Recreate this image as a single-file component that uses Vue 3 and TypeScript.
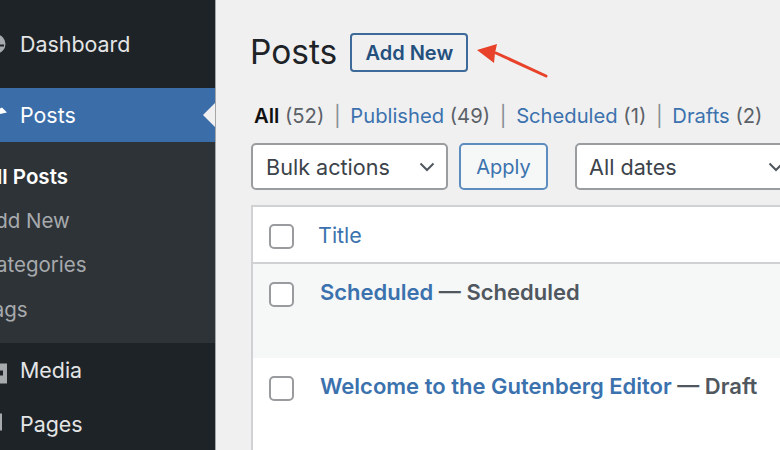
<script setup lang="ts">
const subItems = [
  { label: 'All Posts', current: true },
  { label: 'Add New', current: false },
  { label: 'Categories', current: false },
  { label: 'Tags', current: false },
]
const filters = [
  { label: 'All', count: 52, current: true },
  { label: 'Published', count: 49, current: false },
  { label: 'Scheduled', count: 1, current: false },
  { label: 'Drafts', count: 2, current: false },
]
</script>

<template>
  <div class="page">
    <aside class="sidebar">
      <div class="item dash">
        <svg class="icon" viewBox="0 0 29 29">
          <circle cx="5" cy="14" r="9.500" fill="#a7aaad" />
          <path d="M0 15.500h13" stroke="#1e2327" stroke-width="2" />
        </svg>
        <span>Dashboard</span>
      </div>
      <div class="item active">
        <svg class="icon" viewBox="0 0 29 29"><path d="M11 6.500 16 11.500 9 13 4 20 0 14 6 9z" fill="#fff" /></svg>
        <span>Posts</span>
        <i class="notch"></i>
      </div>
      <ul class="sub">
        <li v-for="s in subItems" :key="s.label" :class="{ current: s.current }">{{ s.label }}</li>
      </ul>
      <div class="item media">
        <svg class="icon" viewBox="0 0 29 29"><path fill-rule="evenodd" d="M0 7.500h16v20H0zM4 14.500v5h8v-5z" fill="#a7aaad" /></svg>
        <span>Media</span>
      </div>
      <div class="item pages">
        <svg class="icon" viewBox="0 0 29 29"><path d="M0 3.500h11v17H0z" fill="#a7aaad" /></svg>
        <span>Pages</span>
      </div>
    </aside>

    <main class="main">
      <div class="head">
        <h1>Posts</h1>
        <a class="add">Add New</a>
        <svg class="arrow" viewBox="0 0 76 40" width="76" height="40">
          <path d="M20 11 L70 34" stroke="#e8432a" stroke-width="3" stroke-linecap="round" fill="none" />
          <path d="M1 8 L21 2 L19 11 L18 21 Z" fill="#e8432a" />
        </svg>
      </div>

      <div class="filters">
        <template v-for="(f, i) in filters" :key="f.label">
          <span v-if="i > 0" class="sep">|</span>
          <span class="filter">
            <b v-if="f.current">{{ f.label }}</b>
            <a v-else>{{ f.label }}</a>
            <span class="count"> ({{ f.count }})</span>
          </span>
        </template>
      </div>

      <div class="actions">
        <div class="select bulk">
          <span>Bulk actions</span>
          <svg viewBox="0 0 16 10" width="16" height="10"><path d="M1.500 1.500 8 8l6.500-6.500" fill="none" stroke="#50575e" stroke-width="2" /></svg>
        </div>
        <a class="apply">Apply</a>
        <div class="select dates">
          <span>All dates</span>
          <svg viewBox="0 0 16 10" width="16" height="10"><path d="M1.500 1.500 8 8l6.500-6.500" fill="none" stroke="#50575e" stroke-width="2" /></svg>
        </div>
      </div>

      <section class="table">
        <div class="row thead">
          <i class="check"></i>
          <a class="title-col">Title</a>
        </div>
        <div class="row post alt">
          <i class="check"></i>
          <div class="post-title"><a>Scheduled</a> — Scheduled</div>
        </div>
        <div class="row post">
          <i class="check"></i>
          <div class="post-title"><a>Welcome to the Gutenberg Editor</a> — Draft</div>
        </div>
      </section>
    </main>
  </div>
</template>

<style>
html, body { margin: 0; background: #f0f0f1; }
</style>

<style scoped>
.page {
  width: 780px;
  height: 450px;
  display: flex;
  overflow: hidden;
  background: #f0f0f1;
  font-family: Inter, "Liberation Sans", sans-serif;
}
.sidebar {
  flex: 0 0 215px;
  height: 450px;
  overflow: hidden;
  background: #1e2327;
  border-right: 1px solid #a4a6a8;
}
.item {
  display: flex;
  align-items: center;
  height: 54px;
  margin-left: -9px;
  color: #e4e5e6;
  font-size: 21.400px;
  position: relative;
}
.icon { width: 29px; height: 29px; flex: none; }
.dash { height: 88px; }
.active { background: #3b6ea8; color: #fff; }
.notch {
  position: absolute;
  right: 0;
  top: 15px;
  border: 12px solid transparent;
  border-right-color: #f0f0f1;
  border-left-width: 0;
}
.sub {
  list-style: none;
  margin: 0;
  padding: 12px 0 11px;
  background: #2e3338;
  height: 178px;
  color: #a7aaad;
  font-size: 20.500px;
}
.sub li { height: 44.500px; line-height: 44px; margin-left: -19px; }
.sub .current { color: #fff; font-weight: 600; line-height: 46px; margin-left: -18px; }
.main {
  flex: 1;
  min-width: 0;
  padding-left: 35px;
}
.head {
  height: 62px;
  padding-top: 21px;
  display: flex;
  align-items: center;
}
h1 {
  margin: 0 0 0 -1px;
  font-size: 33.500px;
  font-weight: 400;
  color: #1d2327;
}
.add {
  margin-left: 13px;
  width: 118px;
  height: 39px;
  padding-top: 1px;
  box-sizing: border-box;
  display: flex;
  align-items: center;
  justify-content: center;
  border: 2px solid #3d6a98;
  border-radius: 4px;
  color: #24507e;
  font-size: 20px;
  font-weight: 600;
}
.arrow { margin: 19px 0 0 8px; flex: none; }
.filters {
  margin-top: 16px;
  height: 33px;
  display: flex;
  align-items: center;
  font-size: 20.200px;
  color: #5b6167;
  white-space: nowrap;
}
.filters b { color: #111; font-weight: 600; }
.filters a { color: #3b72ae; }
.filter { padding-left: 3px; }
.sep { margin: 0 9.700px; color: #888c90; }
.sep + .filter { padding-left: 0; }
.actions {
  display: flex;
  margin-top: 11px;
  height: 47px;
  align-items: stretch;
  font-size: 21.600px;
}
.select {
  box-sizing: border-box;
  background: #fff;
  border: 2px solid #9a9da0;
  border-radius: 5px;
  display: flex;
  align-items: center;
  justify-content: space-between;
  color: #3c434a;
  flex: none;
}
.bulk { width: 197px; padding: 0 11px 0 13px; }
.dates { width: 224px; padding: 0 13px 0 12px; margin-left: 27px; }
.apply {
  margin-left: 11px;
  width: 89px;
  flex: none;
  box-sizing: border-box;
  display: flex;
  align-items: center;
  justify-content: center;
  background: #f6f7f7;
  border: 2px solid #5d8dbf;
  border-radius: 5px;
  color: #3b72ae;
  font-size: 20px;
}
.table {
  margin-top: 15px;
  background: #fff;
  border: 2px solid #cfd1d3;
  border-right: 0;
  border-bottom: 0;
  height: 300px;
}
.row { display: flex; align-items: flex-start; padding-left: 16px; }
.check {
  flex: none;
  box-sizing: border-box;
  width: 25px;
  height: 25px;
  border: 2px solid #999b9e;
  border-radius: 5px;
  background: #fff;
}
.thead {
  height: 57px;
  padding-top: 17px;
  box-sizing: border-box;
  border-bottom: 2px solid #cfd1d3;
}
.title-col { margin: -1px 0 0 24px; color: #3b72ae; font-size: 21.500px; line-height: 24px; }
.post { box-sizing: border-box; padding-top: 18px; height: 94px; }
.alt { background: #f6f7f7; }
.post-title {
  margin: -1px 0 0 26px;
  font-size: 22px;
  font-weight: 600;
  color: #50575e;
  line-height: 22px;
  white-space: nowrap;
}
.post-title a { color: #3b72ae; }
</style>
